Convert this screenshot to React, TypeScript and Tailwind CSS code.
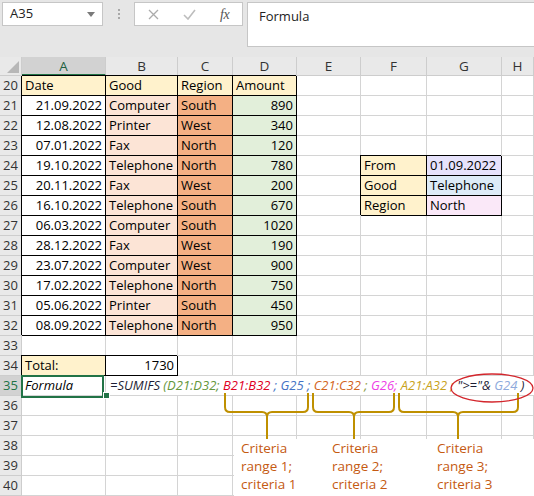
import React from 'react';
import clsx from 'clsx';

type CellProps = {
  t?: string;
  bg?: string;
  b?: boolean;
  r?: boolean;
};

const COLS = ['A', 'B', 'C', 'D', 'E', 'F', 'G', 'H'];

const sales: [string, string, string, string][] = [
  ['21.09.2022', 'Computer', 'South', '890'],
  ['12.08.2022', 'Printer', 'West', '340'],
  ['07.01.2022', 'Fax', 'North', '120'],
  ['19.10.2022', 'Telephone', 'North', '780'],
  ['20.11.2022', 'Fax', 'West', '200'],
  ['16.10.2022', 'Telephone', 'South', '670'],
  ['06.03.2022', 'Computer', 'South', '1020'],
  ['28.12.2022', 'Fax', 'West', '190'],
  ['23.07.2022', 'Computer', 'West', '900'],
  ['17.02.2022', 'Telephone', 'North', '750'],
  ['05.06.2022', 'Printer', 'South', '450'],
  ['08.09.2022', 'Telephone', 'North', '950'],
];

// criteria block in F24:G26
const criteria: Record<number, [string, string, string]> = {
  24: ['From', '01.09.2022', 'bg-[#e6e2fb]'],
  25: ['Good', 'Telephone', 'bg-[#ddebf7]'],
  26: ['Region', 'North', 'bg-[#fae8f8]'],
};

const formula: [string, string][] = [
  ['=SUMIFS ', 'text-[#1d1d35]'],
  ['(D21:D32;', 'text-[#64963a]'],
  [' B21:B32', 'text-[#e0001f]'],
  [' ; G25 ;', 'text-[#4472c4]'],
  [' C21:C32', 'text-[#d2641c]'],
  [' ; ', 'text-[#8a9a3a]'],
  ['G26;', 'text-[#ee3fe6]'],
  [' A21:A32', 'text-[#c8a31a]'],
  [' ;', 'text-[#c8a31a]'],
  [' ">="&', 'text-[#1d1d35]'],
  [' G24', 'text-[#8eaadc]'],
  [' )', 'text-[#1d1d35]'],
];

function rowCells(n: number): CellProps[] {
  const cells: CellProps[] = COLS.map(() => ({}));
  if (n === 20) {
    ['Date', 'Good', 'Region', 'Amount'].forEach((t, i) => {
      cells[i] = { t, bg: 'bg-[#fff2cc]', b: true };
    });
  }
  if (n >= 21 && n <= 32) {
    const [d, g, reg, amt] = sales[n - 21];
    cells[0] = { t: d, r: true, b: true };
    cells[1] = { t: g, bg: 'bg-[#fce4d6]', b: true };
    cells[2] = { t: reg, bg: 'bg-[#f4b084]', b: true };
    cells[3] = { t: amt, bg: 'bg-[#e2efda]', r: true, b: true };
  }
  if (criteria[n]) {
    const [label, value, bg] = criteria[n];
    cells[5] = { t: label, bg: 'bg-[#fff2cc]', b: true };
    cells[6] = { t: value, bg, b: true };
  }
  if (n === 34) {
    cells[0] = { t: 'Total:', bg: 'bg-[#fff2cc]', b: true };
    cells[1] = { t: '1730', r: true, b: true };
  }
  return cells;
}

function Cell({ t, bg, b, r }: CellProps) {
  return (
    <div
      className={clsx(
        'px-[3px] leading-[19px] whitespace-nowrap overflow-hidden border-r border-b',
        b ? 'border-black shadow-[-1px_-1px_0_0_#000]' : 'border-[#d4d4d4]',
        r && 'text-right',
        bg
      )}
    >
      {t}
    </div>
  );
}

function RowHead({ n, active }: { n: number; active?: boolean }) {
  return (
    <div
      className={clsx(
        'text-center text-[13px] leading-[19px] border-r border-b border-[#cdcdcd]',
        active ? 'bg-[#d2d2d2] text-[#217346]' : 'bg-[#e9e9e9] text-[#333]'
      )}
    >
      {n}
    </div>
  );
}

function FormulaBar() {
  return (
    <div className="h-[57px] bg-[#e6e6e6] flex items-start pt-[2px] pl-[2px]">
      <div className="w-[101px] h-[24px] bg-white border border-[#c6c6c6] flex items-center justify-between pl-[7px] pr-[7px] text-[13px] text-[#222]">
        <span>A35</span>
        <svg width="8" height="5" viewBox="0 0 8 5">
          <path d="M0 0h8L4 5z" fill="#7a7a7a" />
        </svg>
      </div>
      <div className="w-[31px] h-[24px] flex flex-col items-center justify-center gap-[2px]">
        <span className="w-[2px] h-[2px] bg-[#a8a8a8]" />
        <span className="w-[2px] h-[2px] bg-[#a8a8a8]" />
        <span className="w-[2px] h-[2px] bg-[#a8a8a8]" />
      </div>
      <div className="w-[109px] h-[24px] bg-white border border-[#c6c6c6] flex items-center pl-[13px]">
        <svg width="11" height="11" viewBox="0 0 11 11">
          <path d="M1 1l9 9M10 1l-9 9" stroke="#ababab" strokeWidth="1.3" />
        </svg>
        <svg width="13" height="11" viewBox="0 0 13 11" className="ml-[24px]">
          <path d="M1 6l4 4 7-9" stroke="#bdbdbd" strokeWidth="1.6" fill="none" />
        </svg>
        <span className="ml-[24px] font-['Liberation_Serif',serif] italic text-[14px] text-[#555] tracking-[-0.5px]">
          fx
        </span>
      </div>
      <div className="ml-[4px] flex-1 h-[45px] bg-white border border-[#c6c6c6] border-r-0 pl-[11px] pt-[3px] text-[13px] leading-[20px] text-[#222]">
        Formula
      </div>
    </div>
  );
}

function Sheet() {
  const rows = Array.from({ length: 21 }, (_, i) => 20 + i);
  return (
    <div className="grid grid-cols-[22px_84px_72px_55px_64px_64px_66px_75px_32px] grid-rows-[19px] auto-rows-[20px]">
      <div className="bg-[#e9e9e9] border-r border-b border-[#cdcdcd] relative">
        <svg width="22" height="19" viewBox="0 0 22 19" className="absolute inset-0">
          <path d="M7 16h12V4z" fill="#b7b7b7" />
        </svg>
      </div>
      {COLS.map((c, i) => (
        <div
          key={c}
          className={clsx(
            'text-center text-[13.5px] leading-[18px] border-r border-[#cdcdcd]',
            i === 0
              ? 'bg-[#d2d2d2] text-[#1f5f41] border-b-2 border-b-[#217346]'
              : 'bg-[#e9e9e9] text-[#333] border-b'
          )}
        >
          {c}
        </div>
      ))}
      {rows.map((n) => {
        if (n === 35) {
          return (
            <React.Fragment key={n}>
              <RowHead n={n} active />
              <div className="relative px-[3px] leading-[19px] italic border-r border-b border-[#d4d4d4]">
                Formula
                <div className="absolute left-[-1px] top-[-1px] w-[83px] h-[23px] border-2 border-[#217346]" />
                <div className="absolute left-[81px] top-[16px] w-[7px] h-[7px] bg-[#217346] border border-white" />
              </div>
              <div className="col-span-7 pl-[4px] leading-[19px] italic whitespace-nowrap border-b border-[#d4d4d4]">
                {formula.map(([t, c], i) => (
                  <span key={i} className={c}>
                    {t}
                  </span>
                ))}
              </div>
            </React.Fragment>
          );
        }
        return (
          <React.Fragment key={n}>
            <RowHead n={n} />
            {rowCells(n).map((c, i) => (
              <Cell key={i} {...c} />
            ))}
          </React.Fragment>
        );
      })}
    </div>
  );
}

function brace(x1: number, x2: number, xm: number) {
  const y0 = 393;
  const y = 412;
  const yb = 439;
  const r = 5;
  return (
    `M${x1} ${y0}V${y - r}Q${x1} ${y} ${x1 + r} ${y}H${xm - r}Q${xm} ${y} ${xm} ${y + r}V${yb}` +
    `M${x2} ${y0}V${y - r}Q${x2} ${y} ${x2 - r} ${y}H${xm + r}Q${xm} ${y} ${xm} ${y + r}`
  );
}

function Annotations() {
  const notes = [
    ['Criteria', 'range 1;', 'criteria 1'],
    ['Criteria', 'range 2;', 'criteria 2'],
    ['Criteria', 'range 3;', 'criteria 3'],
  ];
  return (
    <>
      <div className="absolute left-[234px] top-[439px] w-[300px] h-[57px] bg-white flex pl-[7px] text-[13.5px] leading-[18px] text-[#c55a11]">
        {notes.map((lines, i) => (
          <div key={i} className={clsx(i === 0 ? 'w-[91px]' : i === 1 ? 'w-[105px]' : 'flex-1')}>
            {lines.map((l) => (
              <div key={l}>{l}</div>
            ))}
          </div>
        ))}
      </div>
      <svg className="absolute inset-0 pointer-events-none" width="534" height="496" viewBox="0 0 534 496">
        <g fill="none" stroke="#bf9000" strokeWidth="2">
          <path d={brace(225, 308, 267)} />
          <path d={brace(313, 394, 354)} />
          <path d={brace(399, 518, 458)} />
        </g>
        <ellipse cx="492" cy="388" rx="41" ry="14" fill="none" stroke="#d3262c" strokeWidth="1.3" />
      </svg>
    </>
  );
}

export default function App() {
  return (
    <div className="relative w-[534px] h-[496px] overflow-hidden bg-white font-['Open_Sans',sans-serif] text-[13px] text-black">
      <FormulaBar />
      <Sheet />
      <Annotations />
    </div>
  );
}
